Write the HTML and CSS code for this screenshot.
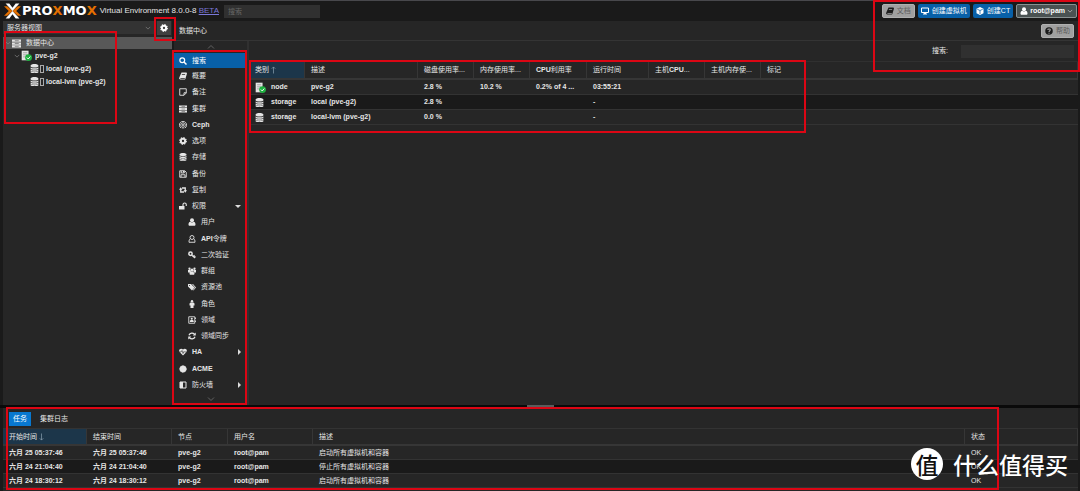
FILE: index.html
```
<!DOCTYPE html>
<html lang="zh-CN">
<head>
<meta charset="utf-8">
<title>Proxmox Virtual Environment</title>
<link rel="stylesheet" href="styles.css">
</head>
<body>
<svg class="defs" aria-hidden="true">
  <symbol id="search" viewBox="0 0 16 16"><circle cx="6.5" cy="6.5" r="4.8" fill="none" stroke="currentColor" stroke-width="2.4"/><path d="M10 10l5 5" stroke="currentColor" stroke-width="3"/></symbol>
  <symbol id="book" viewBox="0 0 16 16"><path fill="currentColor" fill-rule="evenodd" d="M5 1h10l1 2-3 10-1 2H2l-2-2 1-3zM6 4l-.5 1.500h6.500l.5-1.500zM2.500 12l.5 1.300h8.500l.4-1.300z"/></symbol>
  <symbol id="note" viewBox="0 0 16 16"><path fill="none" stroke="currentColor" stroke-width="1.800" d="M1.500 1.500h13v8.500l-4.500 4.500H1.500zM14.500 9.500H10v5"/></symbol>
  <symbol id="server" viewBox="0 0 16 16"><path fill="currentColor" d="M0 1h16v4H0zM0 6h16v4H0zM0 11h16v4H0z"/><path stroke="#444" stroke-width="1" d="M5 3h7M5 8h7M5 13h7"/></symbol>
  <symbol id="ceph" viewBox="0 0 16 16"><g fill="none" stroke="currentColor" stroke-width="1.700"><path d="M4 14A7.200 7.200 0 1 1 12 14"/><path d="M5 11.500A4.500 4.500 0 1 1 11 11.500"/><circle cx="8" cy="8" r="1.600"/><path d="M6.500 15v-4M9.500 15v-4"/></g></symbol>
  <symbol id="gear" viewBox="0 0 16 16"><circle cx="8" cy="8" r="4.300" fill="none" stroke="currentColor" stroke-width="4"/><circle cx="8" cy="8" r="6.600" fill="none" stroke="currentColor" stroke-width="2.400" stroke-dasharray="2.600 2.580"/></symbol>
  <symbol id="db" viewBox="0 0 16 16"><path fill="currentColor" d="M1 3c0-4 14-4 14 0v1c0 3-14 3-14 0zM1 6c2 2 12 2 14 0v2c0 3-14 3-14 0zM1 9.700c2 2 12 2 14 0v2c0 3-14 3-14 0zM1 13c2 2 12 2 14 0v1c0 3-14 3-14 0z"/></symbol>
  <symbol id="save" viewBox="0 0 16 16"><path fill="none" stroke="currentColor" stroke-width="1.800" d="M1.500 1.500h10l3 3v10h-13zM4.500 2v4h6V2M4 14V9.500h8V14"/><path fill="currentColor" d="M8 2h2v3H8z"/></symbol>
  <symbol id="retweet" viewBox="0 0 16 16"><path fill="none" stroke="currentColor" stroke-width="2.600" d="M10 12H3.500V6M6 4h6.500V10"/><path fill="currentColor" d="M0 7.500l3.500-5L7 7.500zM9 8.500h7l-3.500 5z"/></symbol>
  <symbol id="unlock" viewBox="0 0 16 16"><path fill="currentColor" d="M0 8h11v7H0z"/><path fill="none" stroke="currentColor" stroke-width="2.200" d="M8 8V5c0-4 6.500-4 6.500 0v3"/></symbol>
  <symbol id="user" viewBox="0 0 16 16"><circle cx="8" cy="4.500" r="4" fill="currentColor"/><path fill="currentColor" d="M4.500 7.500C2 8 1 10 1 13c0 2 1 2.500 2 2.500h10c1 0 2-.5 2-2.500 0-3-1-5-3.500-5.500-2 2-5 2-7 0z"/></symbol>
  <symbol id="usero" viewBox="0 0 16 16"><g fill="none" stroke="currentColor" stroke-width="1.800"><circle cx="8" cy="5" r="4"/><path d="M4.500 7.500C2.500 9 2 11 2 14.500h12c0-3.500-.5-5.500-2.500-7"/></g></symbol>
  <symbol id="key" viewBox="0 0 16 16"><circle cx="5" cy="5.500" r="3.300" fill="none" stroke="currentColor" stroke-width="3"/><path d="M7 8l7 6M10.500 11l2.500-2.500M13 13l2-2" fill="none" stroke="currentColor" stroke-width="2.300"/></symbol>
  <symbol id="users" viewBox="0 0 16 16"><g fill="currentColor"><circle cx="3" cy="3.500" r="2.300"/><circle cx="13" cy="3.500" r="2.300"/><circle cx="8" cy="6" r="3.200"/><path d="M0 6h5l1 4-3 1H0zM16 6h-5l-1 4 3 1h3zM3 14c0-4 1-5 3-5h4c2 0 3 1 3 5l-1 1.500H4z"/></g></symbol>
  <symbol id="tags" viewBox="0 0 16 16"><path fill="currentColor" d="M0 2h6l7 7-5 6-8-8zM8 2h2l6 7-5 6-1-1 4-5z"/><circle cx="3" cy="4.800" r="1" fill="#262626"/></symbol>
  <symbol id="male" viewBox="0 0 16 16"><circle cx="8" cy="2.500" r="2.400" fill="currentColor"/><path fill="currentColor" d="M5 5h6l2 2v4h-2v5H5v-5H3V7z"/></symbol>
  <symbol id="address" viewBox="0 0 16 16"><path fill="none" stroke="currentColor" stroke-width="1.700" d="M1.500 1.500h12v13h-12zM15 3v3M15 9v3"/><circle cx="7.500" cy="5.500" r="2.200" fill="currentColor"/><path fill="currentColor" d="M3.500 12c0-4 2-4 4-4s4 0 4 4z"/></symbol>
  <symbol id="refresh" viewBox="0 0 16 16"><path fill="none" stroke="currentColor" stroke-width="2.600" d="M2 6.500C4 1 10 1 13 4.500M14 9.500C12 15 6 15 3 11.500"/><path fill="currentColor" d="M15.500 1v6H9.500zM.5 15V9h6z"/></symbol>
  <symbol id="heart" viewBox="0 0 16 16"><path fill="currentColor" d="M8 15L1 8C-2 3 4-1 8 3c4-4 10 0 7 5z"/><path fill="none" stroke="#262626" stroke-width="1.200" d="M0 8h4l2-3 2 6 2-4 1 1h5"/></symbol>
  <symbol id="cert" viewBox="0 0 16 16"><circle cx="8" cy="8" r="6.500" fill="currentColor" stroke="currentColor" stroke-width="2" stroke-dasharray="2 1.400"/></symbol>
  <symbol id="shield" viewBox="0 0 16 16"><path fill="none" stroke="currentColor" stroke-width="2" d="M2 2h12v12H2z"/><path fill="currentColor" d="M2 2h6v12H2z"/></symbol>
  <symbol id="desktop" viewBox="0 0 16 16"><path fill="none" stroke="currentColor" stroke-width="2" d="M1 2h14v9H1z"/><path fill="currentColor" d="M6 11h4v2h2v2H4v-2h2z"/></symbol>
  <symbol id="cube" viewBox="0 0 16 16"><path fill="currentColor" d="M8 0l7 3.500v9L8 16l-7-3.500v-9z"/><path fill="none" stroke="#0860a8" stroke-width="1.500" d="M2.500 4.500L8 7l5.500-2.500M8 7v7"/></symbol>
  <symbol id="help" viewBox="0 0 16 16"><circle cx="8" cy="8" r="7.500" fill="currentColor"/><path fill="none" stroke="#a0a0a0" stroke-width="2.200" d="M5.500 6C6 3 11 3.500 10.500 6c0 1.500-2.500 1.700-2.500 4M8 11.500v2"/></symbol>
  <symbol id="node" viewBox="0 0 16 16"><path fill="#e4e4e4" d="M1 1h10v14H1z"/><path stroke="#8c8c8c" d="M3 4h6M3 7h6M3 10h3"/><circle cx="11" cy="11" r="5" fill="#1fb141"/><path fill="none" stroke="#fff" stroke-width="1.400" d="M8.500 11l2 2 3-3.500"/></symbol>
  <symbol id="down" viewBox="0 0 16 16"><path fill="none" stroke="currentColor" stroke-width="1.800" d="M2 5l6 6 6-6"/></symbol>
  <symbol id="up" viewBox="0 0 16 16"><path fill="none" stroke="currentColor" stroke-width="1.800" d="M2 11l6-6 6 6"/></symbol>
  <symbol id="sortup" viewBox="0 0 16 16"><path fill="none" stroke="currentColor" stroke-width="1.600" d="M8 16V1M4 5l4-4 4 4"/></symbol>
  <symbol id="sortdown" viewBox="0 0 16 16"><path fill="none" stroke="currentColor" stroke-width="1.600" d="M8 0v15M4 11l4 4 4-4"/></symbol>
</svg>

<header class="topbar">
  <svg class="mark" viewBox="0 0 32 30" aria-hidden="true"><path fill="#e57000" d="M0 6h6l10 9-10 9H0l9-9zM32 6h-6l-10 9 10 9h6l-9-9z"/><path fill="#fff" d="M3 1h7l6 8 6-8h7L16 15zM3 29h7l6-8 6 8h7L16 15z"/></svg>
  <span class="brand">PRO<b>X</b>MO<b>X</b></span>
  <span class="version">Virtual Environment 8.0.0-8 <a href="#">BETA</a></span>
  <input class="global-search" type="text" placeholder="搜索" aria-label="搜索">
  <div class="actions">
    <button class="btn gray"><svg class="icon"><use href="#book"/></svg>文档</button>
    <button class="btn blue"><svg class="icon"><use href="#desktop"/></svg>创建虚拟机</button>
    <button class="btn blue"><svg class="icon"><use href="#cube"/></svg>创建CT</button>
    <button class="btn account"><svg class="icon"><use href="#user"/></svg>root@pam<svg class="chev"><use href="#down"/></svg></button>
  </div>
</header>

<main class="workspace">
  <aside class="sidebar">
    <div class="view-row">
      <button class="view-select">服务器视图<svg class="chev"><use href="#down"/></svg></button>
      <button class="gear" aria-label="设置"><svg class="icon"><use href="#gear"/></svg></button>
    </div>
    <ul class="tree">
      <li class="selected"><svg class="chev"><use href="#down"/></svg><svg class="tree-icon"><use href="#server"/></svg><span>数据中心</span></li>
      <li class="level1"><svg class="chev"><use href="#down"/></svg><svg class="tree-icon node"><use href="#node"/></svg><span>pve-g2</span></li>
      <li class="level2"><svg class="tree-icon"><use href="#db"/></svg><i class="usage"></i><span>local (pve-g2)</span></li>
      <li class="level2"><svg class="tree-icon"><use href="#db"/></svg><i class="usage"></i><span>local-lvm (pve-g2)</span></li>
    </ul>
  </aside>

  <section class="content">
    <div class="content-head"><span>数据中心</span><button class="btn gray"><svg class="icon"><use href="#help"/></svg>帮助</button></div>
    <div class="content-body">
      <nav class="menu">
        <svg class="scroll"><use href="#up"/></svg>
        <ul>
          <li class="active"><svg class="icon"><use href="#search"/></svg>搜索</li>
          <li><svg class="icon"><use href="#book"/></svg>概要</li>
          <li><svg class="icon"><use href="#note"/></svg>备注</li>
          <li><svg class="icon"><use href="#server"/></svg>集群</li>
          <li class="latin"><svg class="icon"><use href="#ceph"/></svg>Ceph</li>
          <li><svg class="icon"><use href="#gear"/></svg>选项</li>
          <li><svg class="icon"><use href="#db"/></svg>存储</li>
          <li><svg class="icon"><use href="#save"/></svg>备份</li>
          <li><svg class="icon"><use href="#retweet"/></svg>复制</li>
          <li><svg class="icon"><use href="#unlock"/></svg>权限<i class="caret open"></i></li>
          <li class="sub"><svg class="icon"><use href="#user"/></svg>用户</li>
          <li class="sub"><svg class="icon"><use href="#usero"/></svg><span><b>API</b>令牌</span></li>
          <li class="sub"><svg class="icon"><use href="#key"/></svg>二次验证</li>
          <li class="sub"><svg class="icon"><use href="#users"/></svg>群组</li>
          <li class="sub"><svg class="icon"><use href="#tags"/></svg>资源池</li>
          <li class="sub"><svg class="icon"><use href="#male"/></svg>角色</li>
          <li class="sub"><svg class="icon"><use href="#address"/></svg>领域</li>
          <li class="sub"><svg class="icon"><use href="#refresh"/></svg>领域同步</li>
          <li class="latin"><svg class="icon"><use href="#heart"/></svg>HA<i class="caret"></i></li>
          <li class="latin"><svg class="icon"><use href="#cert"/></svg>ACME</li>
          <li><svg class="icon"><use href="#shield"/></svg>防火墙<i class="caret"></i></li>
        </ul>
        <svg class="scroll"><use href="#down"/></svg>
      </nav>
      <div class="results">
        <div class="filter"><label for="filter">搜索:</label><input id="filter" type="text"></div>
        <table class="grid resources">
          <colgroup><col class="w56"><col class="w113"><col class="w56"><col class="w56"><col class="w57"><col class="w62"><col class="w56"><col class="w56"><col></colgroup>
          <thead><tr><th class="sorted">类别<svg class="sort"><use href="#sortup"/></svg></th><th>描述</th><th>磁盘使用率...</th><th>内存使用率...</th><th><b>CPU</b>利用率</th><th>运行时间</th><th>主机<b>CPU</b>...</th><th>主机内存使...</th><th>标记</th></tr></thead>
          <tbody>
            <tr><td><span class="kind"><svg class="tree-icon node"><use href="#node"/></svg>node</span></td><td>pve-g2</td><td>2.8 %</td><td>10.2 %</td><td>0.2% of 4 ...</td><td>03:55:21</td><td></td><td></td><td></td></tr>
            <tr><td><span class="kind"><svg class="tree-icon"><use href="#db"/></svg>storage</span></td><td>local (pve-g2)</td><td>2.8 %</td><td></td><td></td><td>-</td><td></td><td></td><td></td></tr>
            <tr><td><span class="kind"><svg class="tree-icon"><use href="#db"/></svg>storage</span></td><td>local-lvm (pve-g2)</td><td>0.0 %</td><td></td><td></td><td>-</td><td></td><td></td><td></td></tr>
          </tbody>
        </table>
      </div>
    </div>
  </section>
</main>

<div class="splitter"><i></i></div>

<section class="log">
  <div class="tabs"><button class="on">任务</button><button>集群日志</button></div>
  <table class="grid tasks">
    <colgroup><col class="w84"><col class="w85"><col class="w56"><col class="w85"><col><col class="w113"></colgroup>
    <thead><tr><th class="sorted">开始时间<svg class="sort"><use href="#sortdown"/></svg></th><th>结束时间</th><th>节点</th><th>用户名</th><th>描述</th><th>状态</th></tr></thead>
    <tbody>
      <tr><td>六月 25 05:37:46</td><td>六月 25 05:37:46</td><td>pve-g2</td><td>root@pam</td><td class="plain">启动所有虚拟机和容器</td><td class="plain">OK</td></tr>
      <tr><td>六月 24 21:04:40</td><td>六月 24 21:04:40</td><td>pve-g2</td><td>root@pam</td><td class="plain">停止所有虚拟机和容器</td><td class="plain">OK</td></tr>
      <tr><td>六月 24 18:30:12</td><td>六月 24 18:30:12</td><td>pve-g2</td><td>root@pam</td><td class="plain">启动所有虚拟机和容器</td><td class="plain">OK</td></tr>
    </tbody>
  </table>
</section>

<div class="outline tree-box"></div>
<div class="outline gear-box"></div>
<div class="outline menu-box"></div>
<div class="outline grid-box"></div>
<div class="outline actions-box"></div>
<div class="outline log-box"></div>
<div class="watermark"><span class="seal">值</span><span>什么值得买</span></div>
</body>
</html>
```
FILE: styles.css
```
* { box-sizing: border-box; }
html, body { height: 100%; }
body {
  margin: 0;
  display: flex;
  flex-direction: column;
  overflow: hidden;
  position: relative;
  background: #1a1a1a;
  color: #e6e6e6;
  font: 7px/10px "Liberation Sans", "Noto Sans CJK SC", sans-serif;
  white-space: nowrap;
}
ul { list-style: none; margin: 0; padding: 0; }
button, input { font: inherit; color: inherit; border: 0; margin: 0; padding: 0; }
svg { display: block; flex: none; }
.defs { position: absolute; width: 0; height: 0; }
.icon { width: 8px; height: 8px; }
.chev { width: 6px; height: 6px; color: #888; }

.topbar {
  display: flex;
  align-items: center;
  height: 21px;
  padding: 0 3px 0 4px;
  border-top: 1px solid #48484c;
}
.mark { width: 17px; height: 16px; }
.brand { margin-left: 1px; font: bold 13px/16px "DejaVu Sans", sans-serif; color: #fff; }
.brand b { color: #e57000; }
.version { margin-left: 3px; font-size: 8px; }
.version a { color: #7b78d8; }
.global-search { width: 96px; height: 13px; margin-left: 5px; padding: 0 4px; background: #303030; }
.global-search::placeholder { color: #666; }
.actions { display: flex; gap: 3px; margin-left: auto; }
.btn {
  display: flex;
  align-items: center;
  gap: 3px;
  height: 14px;
  padding: 0 3px;
  border-radius: 2px;
}
.gray { background: #a0a0a0; color: #5c5c5c; border: 1px solid #b0b0b0; }
.gray .icon { color: #1c1c1c; }
.blue { background: #0860a8; color: #fff; }
.account { gap: 2px; background: #4a5252; border: 1px solid #8a9292; color: #fff; font-weight: bold; }
.account .chev { color: #ccc; }

.workspace { flex: 1; min-height: 0; display: flex; gap: 2px; padding: 0 2px 0 3px; }
.sidebar { width: 169px; background: #262626; }
.view-row { display: flex; height: 16px; padding-right: 1px; gap: 2px; }
.view-select { flex: 1; display: flex; align-items: center; justify-content: space-between; height: 13px; padding: 0 4px; background: #333; }
.gear { width: 14px; height: 14px; display: flex; align-items: center; justify-content: center; background: #404040; color: #fff; }
.tree li { display: flex; align-items: center; height: 13px; padding-left: 2px; font-weight: bold; }
.tree .selected { height: 12px; background: #585858; font-weight: normal; }
.tree .level1 { padding-left: 11px; }
.tree .level2 { padding-left: 27px; }
.tree-icon { width: 9px; height: 9px; margin-right: 5px; color: #e4e4e4; }
.tree-icon.node { width: 11px; height: 11px; }
.tree .node { margin-right: 3px; }
.tree .selected .tree-icon { margin: 0 5px 0 1px; }
.level1 .chev { margin-right: 1px; }
.level2 .tree-icon { margin-right: 1px; }
.usage { width: 4px; height: 8px; margin-right: 2px; border: 1px solid #aaa; }

.content { flex: 1; min-width: 0; display: flex; flex-direction: column; background: #262626; }
.content-head { display: flex; align-items: center; justify-content: space-between; height: 20px; padding: 0 4px 0 5px; border-bottom: 1px solid #343434; }
.content-body { flex: 1; min-height: 0; display: flex; }
.menu { width: 75px; display: flex; flex-direction: column; align-items: center; border-right: 2px solid #303030; }
.menu ul { flex: 1; align-self: stretch; display: flex; flex-direction: column; }
.menu li { flex: 1; display: flex; align-items: center; gap: 5px; padding: 0 6px 0 5px; }
.menu .sub { padding-left: 14px; }
.menu .active { flex: 0 0 15px; background: #0860a8; color: #fff; }
.latin { font-weight: bold; }
.scroll { width: 12px; height: 12px; padding: 2px; color: #666; }
.caret { margin-left: auto; border: 3px solid transparent; border-right-width: 0; border-left: 3px solid #ddd; }
.caret.open { border: 3px solid transparent; border-bottom-width: 0; border-top: 3px solid #ddd; }
.results { flex: 1; min-width: 0; }
.filter { display: flex; align-items: center; justify-content: flex-end; gap: 13px; height: 21px; padding: 0 4px; border-bottom: 1px solid #303030; }
.filter input { width: 113px; height: 13px; background: #303030; }

.grid { width: 100%; border-collapse: separate; border-spacing: 0; table-layout: fixed; }
.grid th, .grid td { overflow: hidden; padding: 0 0 0 6px; text-align: left; border-bottom: 1px solid #333; }
.grid th { height: 18px; font-weight: normal; border-right: 1px solid #363636; border-bottom: 2px solid #363636; }
.grid td { height: 15px; font-weight: bold; }
.grid .plain { font-weight: normal; }
.grid .sorted { background: #1c364a; }
.grid tbody tr:nth-child(2) { background: #1a1a1a; }
.sort { display: inline-block; width: 7px; height: 8px; margin-left: 1px; vertical-align: -2px; color: #8aa0b0; }
.kind { display: flex; align-items: center; }
.kind .tree-icon { margin-right: 7px; }
.kind .node { margin-right: 5px; }
.w56 { width: 56px; }
.w57 { width: 57px; }
.w62 { width: 62px; }
.w84 { width: 84px; }
.w85 { width: 85px; }
.w113 { width: 113px; }

.splitter { height: 3px; display: flex; justify-content: center; background: #0a0a0a; }
.splitter i { width: 27px; height: 2px; background: #5c5c5c; }
.log { margin: 0 2px 0 3px; padding: 4px 0 3px; background: #262626; }
.tabs { display: flex; gap: 5px; height: 17px; padding-left: 6px; border-bottom: 1px solid #333; }
.tabs button { height: 14px; padding: 0 4px; background: none; }
.tabs .on { background: #0878d0; color: #fff; }
.grid.tasks th { height: 17px; }
.grid.tasks td { height: 14px; }

.outline { position: absolute; border: 2px solid #dc0614; pointer-events: none; }
.tree-box { left: 4px; top: 31px; width: 113px; height: 93px; }
.gear-box { left: 154px; top: 17px; width: 22px; height: 24px; }
.menu-box { left: 172px; top: 50px; width: 75px; height: 355px; }
.grid-box { left: 249px; top: 60px; width: 557px; height: 73px; }
.actions-box { right: 0; top: 0; width: 207px; height: 72px; }
.log-box { left: 6px; right: 81px; bottom: 1px; height: 83px; }
.watermark { position: absolute; right: 12px; bottom: 11px; display: flex; align-items: center; gap: 10px; color: #fff; font: 500 23px/32px "Noto Sans CJK SC", sans-serif; }
.seal { width: 32px; height: 32px; border-radius: 50%; background: #fff; color: #111; text-align: center; }
```
